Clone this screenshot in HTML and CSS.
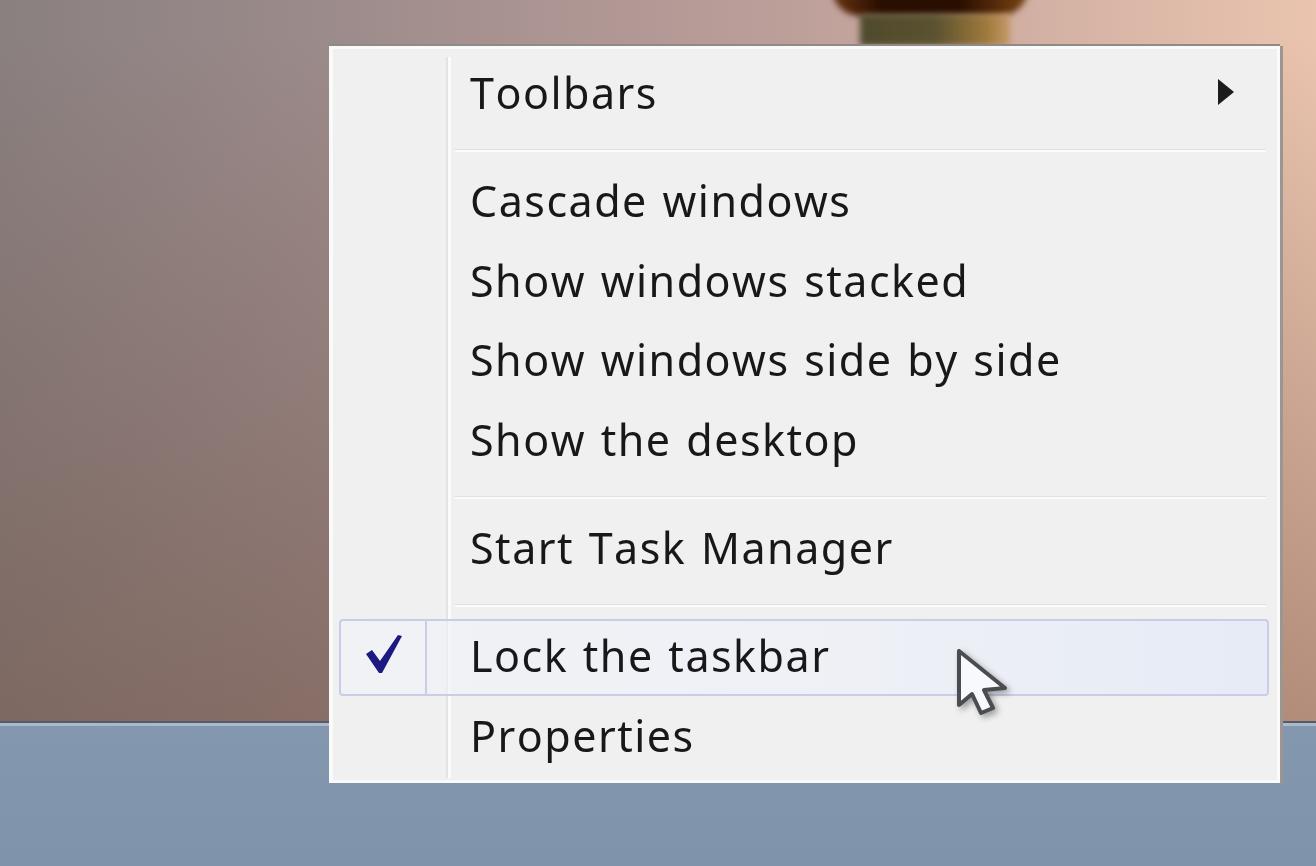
FILE: index.html
```html
<!DOCTYPE html>
<html lang="en">
<head>
    <meta charset="UTF-8">
    <title>Taskbar menu</title>
    <link rel="stylesheet" href="styles.css">
</head>
<body>
    <div class="desktop">
        <div class="wallpaper">
            <div class="vase"></div>
            <div class="vase-top"></div>
        </div>
        <div class="taskbar"></div>

        <div class="menu">
            <div class="gutter"></div>
            <div class="item first">
                <span>Toolbars</span>
                <svg class="arrow" width="18" height="28" viewBox="0 0 18 28"><path d="M1 1 L17 14 L1 27 Z" fill="#1c1c1c"/></svg>
            </div>
            <div class="sep"></div>
            <div class="item">Cascade windows</div>
            <div class="item">Show windows stacked</div>
            <div class="item">Show windows side by side</div>
            <div class="item">Show the desktop</div>
            <div class="sep"></div>
            <div class="item">Start Task Manager</div>
            <div class="sep tight"></div>
            <div class="item checked">
                <div class="check">
                    <svg width="40" height="40" viewBox="0 0 40 40"><path d="M1 19 L7 15 L15 26 L33 0 L37 1 L17 38 L14 38 Z" fill="#1c1a80"/></svg>
                </div>
                <span>Lock the taskbar</span>
            </div>
            <div class="item last">Properties</div>
        </div>

        <svg class="cursor" width="56" height="72" viewBox="0 0 56 72">
            <path d="M3 3 L3 57 L16 46 L25 65 L37 60 L28 42 L49 40 Z" fill="#f8f9fc" stroke="#4a4c50" stroke-width="4" stroke-linejoin="round"/>
        </svg>
    </div>
</body>
</html>
```

FILE: styles.css
```css
html, body {
    margin: 0;
    padding: 0;
    height: 100%;
    overflow: hidden;
}
.desktop {
    position: relative;
    display: flex;
    flex-direction: column;
    width: 1316px;
    height: 866px;
    font-family: "Noto Sans", "Open Sans", sans-serif;
}
.wallpaper {
    position: relative;
    height: 721px;
    overflow: hidden;
    background:
        linear-gradient(180deg, rgba(110, 75, 60, 0) 5%, rgba(110, 75, 60, 0.45) 100%),
        linear-gradient(90deg, #8a8080 0%, #9c8b8b 25%, #bd9f9a 60%, #eac4ae 100%);
}
.vase {
    position: absolute;
    left: 832px;
    top: -12px;
    width: 196px;
    height: 28px;
    border-radius: 0 0 40px 40px;
    background: linear-gradient(90deg, #6b3410 0%, #2a0e00 25%, #2a0e00 65%, #7a4414 100%);
    filter: blur(3px);
}
.vase-top {
    position: absolute;
    left: 860px;
    top: 14px;
    width: 150px;
    height: 32px;
    background: linear-gradient(90deg, #4f4a2c 0%, #5a5230 50%, #a07a3c 85%, #c49a68 100%);
    filter: blur(3px);
}
.taskbar {
    flex: 1;
    background: linear-gradient(180deg, #a9bac8 0 3px, #8398ae 3px, #7f93ab 100%);
    border-top: 2px solid #565a6a;
}
.menu {
    position: absolute;
    left: 329px;
    top: 46px;
    width: 951px;
    height: 737px;
    box-sizing: border-box;
    padding: 7px 8px 8px 6px;
    background: #f0f0f0;
    border: 3px solid #fafafa;
    border-left-width: 4px;
    box-shadow: 0 -2px 0 #8f8a86, 3px 0 0 #9d9690;
    color: #18181a;
    font-size: 43px;
    font-kerning: none;
    letter-spacing: 1.5px;
    word-spacing: 2px;
    filter: blur(0.7px);
}
.gutter {
    position: absolute;
    left: 113px;
    top: 8px;
    bottom: 2px;
    width: 2px;
    background: #e2e3e3;
    border-right: 3px solid #fbfbfb;
}
.item {
    position: relative;
    display: flex;
    align-items: center;
    justify-content: space-between;
    height: 79.5px;
    padding: 0 0 8px 131px;
    box-sizing: border-box;
    white-space: nowrap;
}
.first {
    height: 80px;
}
.last {
    padding-bottom: 5px;
}
.arrow {
    margin-right: 34px;
}
.sep {
    height: 3px;
    margin: 13px 3px 13px 116px;
    background: linear-gradient(180deg, #e0e0e0 0 1px, #fbfbfb 1px);
}
.tight {
    margin-top: 12px;
    margin-bottom: 12px;
}
.checked {
    height: 77px;
    margin-bottom: 3px;
    padding: 0 0 4px 129px;
    justify-content: flex-start;
    border: 2px solid #c9cde8;
    border-radius: 4px;
    background: linear-gradient(90deg, rgba(240, 243, 250, 0.6) 0%, rgba(238, 241, 248, 0.7) 50%, #e6ebf6 100%);
}
.check {
    position: absolute;
    left: 0;
    top: -1px;
    width: 86px;
    height: 75px;
    display: flex;
    align-items: center;
    justify-content: center;
    box-sizing: border-box;
    border-right: 2px solid #c9cde8;
}
.check svg {
    margin: -4px 0 0 3px;
}
.cursor {
    position: absolute;
    left: 956px;
    top: 648px;
    filter: blur(0.7px) drop-shadow(3px 3px 3px rgba(0, 0, 0, 0.35));
}
```
